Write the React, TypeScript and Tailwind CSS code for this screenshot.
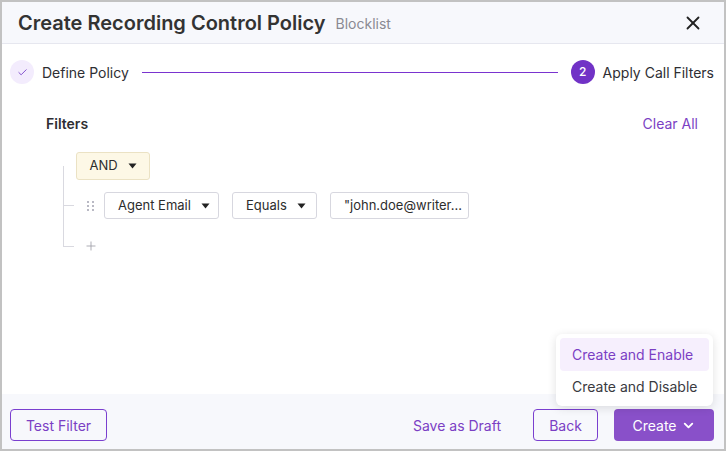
import React from "react";
import { X, Check, ChevronDown, Plus } from "lucide-react";

// Small caret used inside the filter selects
const Caret = () => (
  <svg width="9" height="6" viewBox="0 0 9 6" className="ml-2.5 shrink-0">
    <path d="M0.5 0.5h8L4.5 5.5z" fill="#222" />
  </svg>
);

// Six-dot drag handle
const DragHandle = () => (
  <div className="grid grid-cols-2 gap-x-[3px] gap-y-[2px]">
    {[0, 1, 2, 3, 4, 5].map((i) => (
      <span key={i} className="w-[2px] h-[2px] bg-[#b9b9c4]" />
    ))}
  </div>
);

const SelectBox = ({ label, w }: { label: string; w: string }) => (
  <div
    className={`${w} h-[27px] flex items-center justify-between pl-[13px] pr-[14px] border border-[#d7d7df] rounded-[3px] bg-white text-[13px] text-[#2d2d2d] whitespace-nowrap`}
  >
    <span>{label}</span>
    <Caret />
  </div>
);

export default function App() {
  return (
    <div
      className="w-[726px] h-[451px] border-2 border-[#c2c2c2] bg-white flex flex-col relative overflow-hidden"
      style={{ fontFamily: "Inter, 'Noto Sans', sans-serif" }}
    >
      {/* Header */}
      <div className="h-[42px] shrink-0 bg-[#f7f8fc] border-b border-[#e6e7ef] flex items-center pl-4 pr-[20px]">
        <h1 className="text-[20px] font-semibold text-[#333] mt-[1px]">Create Recording Control Policy</h1>
        <span className="ml-2.5 text-[14px] text-[#8a8a92] mt-[2px]">Blocklist</span>
        <X size={22} strokeWidth={2} className="ml-auto text-[#222]" />
      </div>

      {/* Body */}
      <div className="flex-1 flex flex-col">
        {/* Stepper */}
        <div className="flex items-center pl-2 pr-2.5 mt-4 h-6">
          <div className="w-6 h-6 rounded-full bg-[#f3ecfd] flex items-center justify-center">
            <Check size={11} strokeWidth={2} className="text-[#7a45c8]" />
          </div>
          <span className="ml-2 text-[14px] text-[#2e2e33]">Define Policy</span>
          <div className="flex-1 h-px bg-[#7a34cf] mx-[13px]" />
          <div className="w-6 h-6 rounded-full bg-[#7132c6] flex items-center justify-center text-white text-[12px] font-medium">
            2
          </div>
          <span className="ml-2 text-[14px] text-[#2e2e33]">Apply Call Filters</span>
        </div>

        {/* Filters title */}
        <div className="flex items-center justify-between pl-11 pr-[26px] mt-[29px]">
          <span className="text-[14px] font-semibold text-[#2e2e33]">Filters</span>
          <span className="text-[14px] text-[#7b3fc4]">Clear All</span>
        </div>

        {/* Filter tree */}
        <div className="relative ml-[61px] mt-[18px] flex flex-col">
          <div className="absolute left-0 top-[14px] h-[80px] w-px bg-[#d9d9e0]" />
          <div className="pl-[13px]">
            <div className="w-[74px] h-[28px] flex items-center justify-center bg-[#fdf8e6] border border-[#ebe2c4] rounded-[3px] text-[13px] text-[#2d2d2d]">
              AND
              <Caret />
            </div>
          </div>
          <div className="flex items-center mt-3">
            <div className="w-[11px] h-px bg-[#d9d9e0]" />
            <div className="ml-[13px] mr-[10px]">
              <DragHandle />
            </div>
            <SelectBox label="Agent Email" w="w-[115px]" />
            <div className="ml-[13px]">
              <SelectBox label="Equals" w="w-[85px]" />
            </div>
            <div className="ml-[13px] w-[139px] h-[27px] flex items-center px-[13px] border border-[#d7d7df] rounded-[3px] text-[13px] text-[#2d2d2d] whitespace-nowrap overflow-hidden">
              "john.doe@writer...
            </div>
          </div>
          <div className="flex items-center mt-[17px] h-5">
            <div className="w-[11px] h-px bg-[#d9d9e0]" />
            <Plus size={14} strokeWidth={1.4} className="ml-[10px] text-[#9a9aa4]" />
          </div>
        </div>
      </div>

      {/* Footer */}
      <div className="h-[55px] shrink-0 bg-[#f7f8fc] flex items-start pt-[15px] pl-2 pr-2.5">
        <button className="w-[97px] h-[32px] border border-[#7a3fcf] rounded-[4px] text-[14px] text-[#7b3fc4]">
          Test Filter
        </button>
        <span className="ml-auto mt-[6px] text-[14px] text-[#7b3fc4]">Save as Draft</span>
        <button className="ml-8 w-[65px] h-[32px] border border-[#7a3fcf] rounded-[4px] text-[14px] text-[#7b3fc4]">
          Back
        </button>
        <button className="ml-4 w-[100px] h-[32px] rounded-[4px] bg-[#8950c9] text-[14px] text-white flex items-center justify-center">
          Create
          <ChevronDown size={15} strokeWidth={3} className="ml-1" />
        </button>
      </div>

      {/* Create dropdown menu */}
      <div className="absolute left-[554px] top-[332px] w-[157px] bg-white rounded-[6px] shadow-[0_2px_10px_rgba(0,0,0,0.12)] p-1 flex flex-col">
        <div className="h-[33px] rounded-[4px] bg-[#f6effd] flex items-center pl-3 text-[14px] text-[#7b3fc4]">
          Create and Enable
        </div>
        <div className="h-[31px] flex items-center pl-3 text-[14px] text-[#3a3a3f]">Create and Disable</div>
      </div>
    </div>
  );
}
